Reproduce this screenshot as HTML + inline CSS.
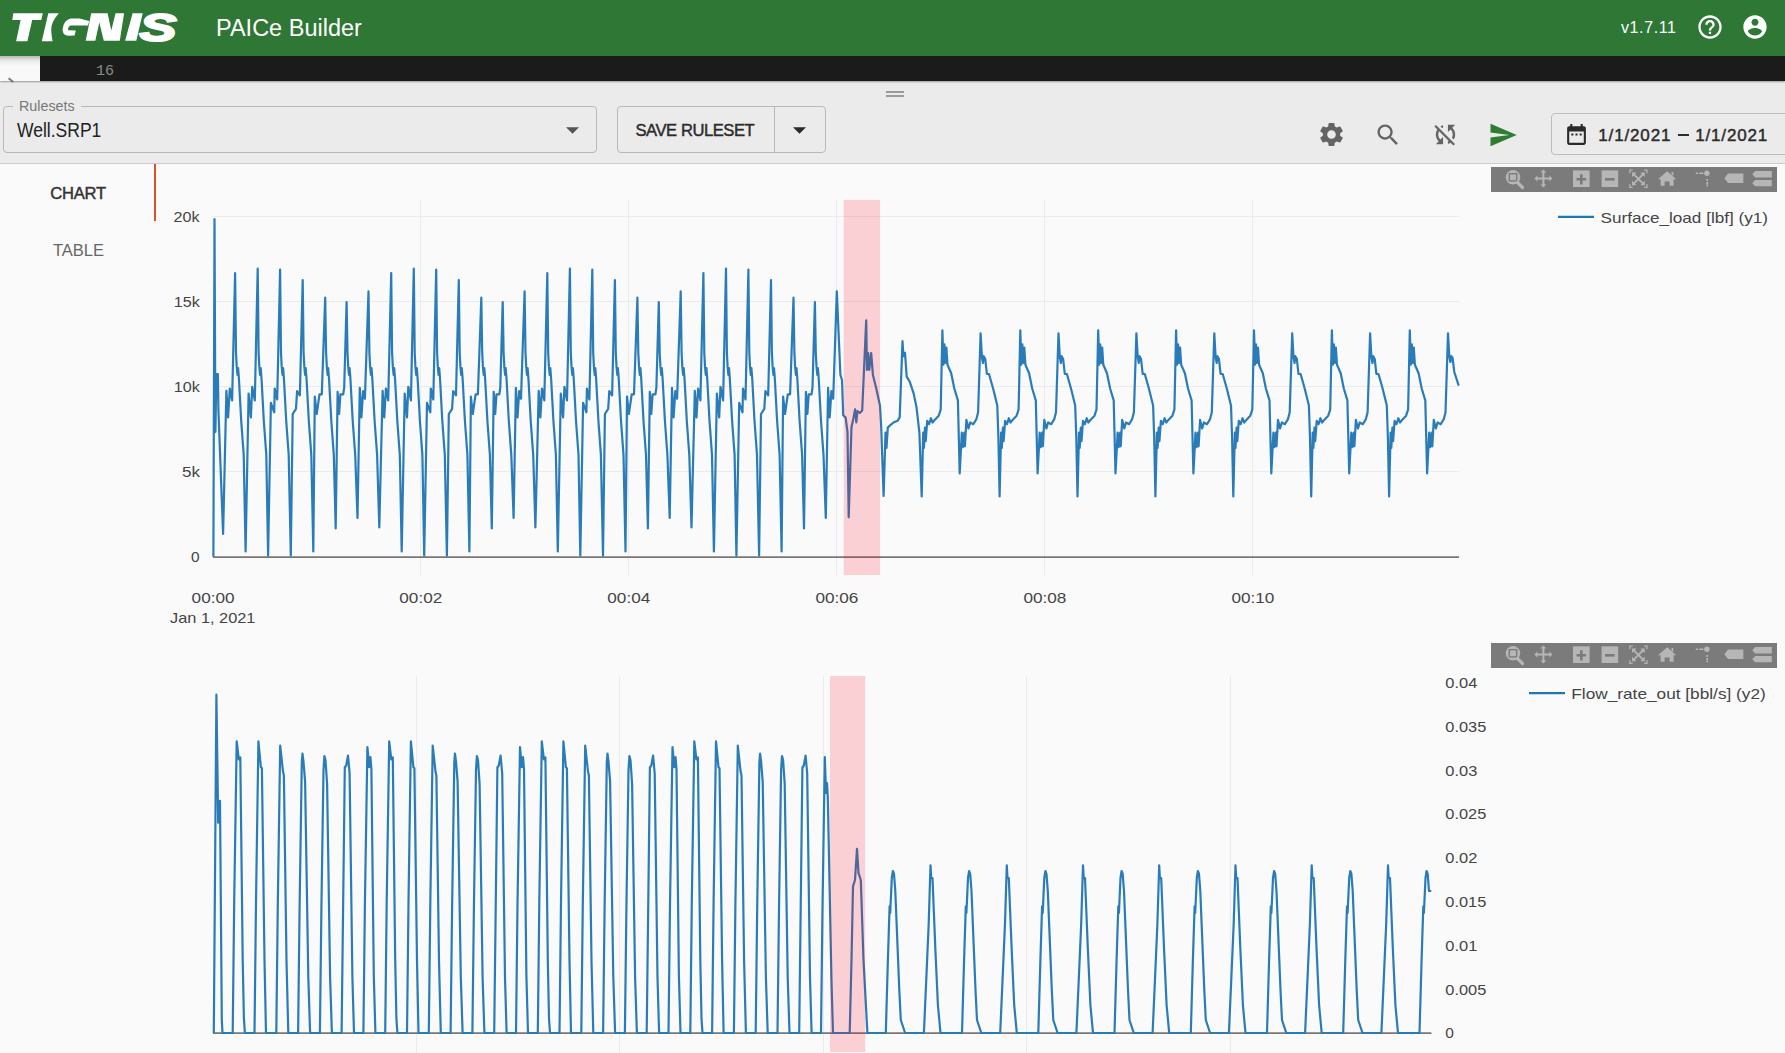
<!DOCTYPE html>
<html><head><meta charset="utf-8">
<style>
*{box-sizing:border-box;margin:0;padding:0}
html,body{width:1785px;height:1053px;overflow:hidden;background:#fafafa;font-family:"Liberation Sans",sans-serif;position:relative}
.abs{position:absolute}
.t{position:absolute;white-space:nowrap;line-height:1}
#hdr{left:0;top:0;width:1785px;height:56px;background:#2e7734}
#strip{left:0;top:56px;width:1785px;height:25px;background:#1b1b1b;box-shadow:0 1px 1.5px rgba(0,0,0,0.35);z-index:2}
#tb{left:0;top:81px;width:1785px;height:83px;background:#ebebeb;border-bottom:1px solid #cdcdcd}
.ax{font-family:"Liberation Sans",sans-serif;font-size:15px;fill:#444}
</style></head><body>
<div id="hdr" class="abs">
  <svg class="abs" style="left:0;top:0" width="200" height="56" viewBox="0 0 200 56">
   <g fill="#fff">
    <path d="M13.3,13.3 L42.8,13.3 L41.3,20.1 L32.2,20.1 L27.4,41.3 L16.1,41.3 L20.6,20.1 L12.3,20.1 Z"/>
    <path d="M48.3,13.3 L58.9,13.3 Q51,22 51.2,30 Q51.5,37 52.6,41.3 L41.8,41.3 Z"/>
    <path d="M70.5,18.6 L79.5,18.6 L89.2,21 L88,25.4 L70.3,25.4 Q67.6,27 68.2,30.2 L75.8,30.4 L74.6,35.6 L68.5,35.8 Q62.4,35.2 62.6,29.2 Q63.4,20.6 70.5,18.6 Z"/>
    <path d="M91.2,13.3 L107.6,13.3 L111.3,30.4 L115.5,13.3 L124.1,13.3 L119.8,40.8 L103.8,40.8 L99.3,22.4 L95.3,40.8 L85.7,40.8 Z"/>
    <path d="M132.6,13.3 L142.7,13.3 L136.3,40.8 L125.1,40.8 Z"/>
   </g>
   <text x="139.5" y="41" font-family="Liberation Sans" font-weight="bold" font-style="italic" font-size="38" fill="#fff" stroke="#fff" stroke-width="2" textLength="37" lengthAdjust="spacingAndGlyphs">S</text>
  </svg>
  <div class="t" style="left:216px;top:17px;color:#fff;font-size:23.5px">PAICe Builder</div>
  <div class="t" style="left:1621px;top:20px;color:#fff;font-size:16px;letter-spacing:0.6px">v1.7.11</div>
  <svg class="abs" style="left:1696px;top:13px" width="28" height="28" viewBox="0 0 24 24"><path fill="#fff" d="M11 18h2v-2h-2v2zm1-16C6.48 2 2 6.48 2 12s4.48 10 10 10 10-4.48 10-10S17.52 2 12 2zm0 18c-4.41 0-8-3.59-8-8s3.59-8 8-8 8 3.59 8 8-3.59 8-8 8zm0-14c-2.21 0-4 1.79-4 4h2c0-1.1.9-2 2-2s2 .9 2 2c0 2-3 1.75-3 5h2c0-2.25 3-2.5 3-5 0-2.21-1.79-4-4-4z"/></svg>
  <svg class="abs" style="left:1741px;top:13px" width="28" height="28" viewBox="0 0 24 24"><path fill="#fff" d="M12 2C6.48 2 2 6.48 2 12s4.48 10 10 10 10-4.48 10-10S17.52 2 12 2zm0 3c1.66 0 3 1.34 3 3s-1.34 3-3 3-3-1.34-3-3 1.34-3 3-3zm0 14.2c-2.5 0-4.71-1.28-6-3.22.03-1.99 4-3.08 6-3.08 1.99 0 5.97 1.09 6 3.08-1.29 1.94-3.5 3.22-6 3.22z"/></svg>
</div>
<div id="strip" class="abs">
  <div class="abs" style="left:0;top:0;width:40px;height:25px;background:linear-gradient(#b9b9b9 0,#ececec 5px,#f8f8f8 10px,#f9f9f9 100%)"></div>
  <div class="abs" style="left:7.5px;top:22.5px;width:5.5px;height:2px;background:#777;transform:rotate(38deg)"></div>
  <div class="t" style="left:96px;top:8px;color:#8a8a8a;font-family:'Liberation Mono',monospace;font-size:15px">16</div>
</div>
<div id="tb" class="abs">
  <div class="abs" style="left:886px;top:10px;width:18px;height:2px;background:#9a9a9a"></div>
  <div class="abs" style="left:886px;top:14px;width:18px;height:2px;background:#9a9a9a"></div>
  <div class="abs" style="left:3px;top:25px;width:594px;height:47px;border:1px solid #b8b8b8;border-radius:4px"></div>
  <div class="abs" style="left:13px;top:17px;width:68px;height:10px;background:#ebebeb"></div>
  <div class="t" style="left:19px;top:18px;color:#777;font-size:14.3px">Rulesets</div>
  <div class="t" style="left:17px;top:38.5px;color:#222;font-size:20px;transform:scaleX(0.875);transform-origin:0 0">Well.SRP1</div>
  <svg class="abs" style="left:566px;top:46px" width="13" height="7" viewBox="0 0 10 5"><path d="M0 0l5 5 5-5z" fill="#555"/></svg>
  <div class="abs" style="left:617px;top:25px;width:209px;height:47px;border:1px solid #b8b8b8;border-radius:4px"></div>
  <div class="abs" style="left:774px;top:25px;width:1px;height:47px;background:#b8b8b8"></div>
  <div class="t" style="left:635.5px;top:41.5px;color:#2c2c2c;font-size:16.6px;letter-spacing:-0.45px;-webkit-text-stroke:0.45px #2c2c2c">SAVE RULESET</div>
  <svg class="abs" style="left:793px;top:46px" width="13" height="7" viewBox="0 0 10 5"><path d="M0 0l5 5 5-5z" fill="#2a2a2a"/></svg>
  <svg class="abs" style="left:1317px;top:39px" width="29" height="29" viewBox="0 0 24 24"><path fill="#646464" d="M19.14 12.94c.04-.3.06-.61.06-.94 0-.32-.02-.64-.07-.94l2.03-1.58c.18-.14.23-.41.12-.61l-1.92-3.32c-.12-.22-.37-.29-.59-.22l-2.39.96c-.5-.38-1.03-.7-1.62-.94l-.36-2.54c-.04-.24-.24-.41-.48-.41h-3.84c-.24 0-.43.17-.47.41l-.36 2.54c-.59.24-1.13.57-1.62.94l-2.39-.96c-.22-.08-.47 0-.59.22L2.74 8.87c-.12.21-.08.47.12.61l2.03 1.58c-.05.3-.09.63-.09.94s.02.64.07.94l-2.03 1.58c-.18.14-.23.41-.12.61l1.92 3.32c.12.22.37.29.59.22l2.39-.96c.5.38 1.03.7 1.62.94l.36 2.54c.05.24.24.41.48.41h3.84c.24 0 .44-.17.47-.41l.36-2.54c.59-.24 1.13-.56 1.62-.94l2.39.96c.22.08.47 0 .59-.22l1.92-3.32c.12-.22.07-.47-.12-.61l-2.01-1.58zM12 15.6c-1.98 0-3.6-1.62-3.6-3.6s1.62-3.6 3.6-3.6 3.6 1.62 3.6 3.6-1.62 3.6-3.6 3.6z"/></svg>
  <svg class="abs" style="left:1374px;top:39.5px" width="28" height="28" viewBox="0 0 24 24"><path fill="#646464" d="M15.5 14h-.79l-.28-.27C15.41 12.59 16 11.11 16 9.5 16 5.91 13.09 3 9.5 3S3 5.91 3 9.5 5.91 16 9.5 16c1.61 0 3.09-.59 4.23-1.57l.27.28v.79l5 4.99L20.49 19l-4.99-5zm-6 0C7.01 14 5 11.99 5 9.5S7.01 5 9.5 5 14 7.01 14 9.5 11.99 14 9.5 14z"/></svg>
  <svg class="abs" style="left:1431px;top:39px" width="29" height="29" viewBox="0 0 24 24"><path fill="#646464" d="M10 6.35V4.26c-.8.21-1.55.54-2.23.96l1.46 1.46c.25-.12.5-.24.77-.33zm-7.14-.94l2.36 2.36C4.45 8.99 4 10.44 4 12c0 2.21.91 4.2 2.36 5.64L4 20h6v-6l-2.24 2.24C6.68 15.15 6 13.66 6 12c0-1 .25-1.94.68-2.77l8.08 8.08c-.25.13-.5.25-.77.34v2.09c.8-.21 1.55-.54 2.23-.96l2.36 2.36 1.27-1.27L4.14 4.14 2.86 5.41zM20 4h-6v6l2.24-2.24C17.32 8.85 18 10.34 18 12c0 1-.25 1.94-.68 2.77l1.46 1.46C19.55 15.01 20 13.56 20 12c0-2.21-.91-4.2-2.36-5.64L20 4z"/></svg>
  <svg class="abs" style="left:1488px;top:39px" width="30" height="30" viewBox="0 0 24 24"><path fill="#2e7d32" d="M2.01 21L23 12 2.01 3 2 10l15 2-15 2z"/></svg>
  <div class="abs" style="left:1551px;top:32px;width:260px;height:42px;border:1px solid #bdbdbd;border-radius:4px"></div>
  <svg class="abs" style="left:1564px;top:41px" width="25" height="25" viewBox="0 0 24 24"><path fill="#2a2a2a" d="M9 11H7v2h2v-2zm4 0h-2v2h2v-2zm4 0h-2v2h2v-2zm2-7h-1V2h-2v2H8V2H6v2H5c-1.11 0-1.99.9-1.99 2L3 20c0 1.1.89 2 2 2h14c1.1 0 2-.9 2-2V6c0-1.1-.9-2-2-2zm0 16H5V9h14v11z"/></svg>
  <div class="t" style="left:1598.3px;top:46px;color:#2c2c2c;font-size:17px;letter-spacing:0.85px;-webkit-text-stroke:0.45px #2c2c2c">1/1/2021</div>
  <div class="abs" style="left:1678px;top:53px;width:10.5px;height:1.8px;background:#2c2c2c"></div>
  <div class="t" style="left:1695.2px;top:46px;color:#2c2c2c;font-size:17px;letter-spacing:0.85px;-webkit-text-stroke:0.45px #2c2c2c">1/1/2021</div>
</div>

<div class="t" style="left:50.3px;top:186px;color:#333;font-size:16.6px;letter-spacing:-0.25px;-webkit-text-stroke:0.45px #333">CHART</div>
<div class="t" style="left:53px;top:242px;color:#666;font-size:16.5px;letter-spacing:0px">TABLE</div>
<div class="abs" style="left:153.5px;top:164px;width:2.5px;height:57px;background:#d9532a"></div>

<svg class="abs" style="left:0;top:0" width="1785" height="1053" viewBox="0 0 1785 1053">
 <g stroke="#ebebeb" stroke-width="1">
  <path d="M213 216.5H1459 M213 301.5H1459 M213 386.5H1459 M213 471.5H1459"/>
  <path d="M420.5 200V575 M628.5 200V575 M836.5 200V575 M1044.5 200V575 M1252.5 200V575"/>
  <path d="M416.5 676V1053 M619.5 676V1053 M823.5 676V1053 M1026.5 676V1053 M1230.5 676V1053"/>
 </g>
 <path d="M213 557.1H1459" stroke="#777" stroke-width="1.6"/>
 <path d="M213 1033.1H1431.4" stroke="#777" stroke-width="1.6"/>
 <path d="M213.4,556.8 L214.5,219.0 L215.4,432.0 L216.4,374.0 L217.9,374.0 L218.4,410.0 L223.1,534.0 L226.4,390.9 L228.1,417.4 L229.8,388.5 L232.1,400.4 L235.1,273.0 L236.0,352.8 L236.7,366.4 L237.5,374.9 L238.1,368.1 L238.9,378.3 L241.2,420.8 L243.7,454.8 L245.6,551.4 L248.6,393.6 L250.9,417.4 L252.2,386.8 L254.8,400.4 L257.7,268.5 L258.6,352.8 L259.3,366.4 L260.1,374.9 L260.7,368.1 L261.5,378.3 L263.8,420.8 L266.3,454.8 L268.1,555.6 L270.9,402.8 L274.2,412.3 L274.7,388.5 L277.2,399.4 L280.1,269.6 L281.0,352.8 L281.7,366.4 L282.5,374.9 L283.1,368.1 L283.9,378.3 L286.2,420.8 L288.7,454.8 L290.8,555.6 L292.7,414.0 L296.0,408.9 L297.1,391.0 L299.9,395.3 L302.7,280.0 L303.6,352.8 L304.3,366.4 L305.1,374.9 L305.7,368.1 L306.5,378.3 L308.8,420.8 L311.3,454.8 L313.3,551.4 L314.8,396.5 L316.7,414.0 L319.5,394.3 L321.8,394.3 L325.2,297.7 L326.1,352.8 L326.8,366.4 L327.6,374.9 L328.2,368.1 L329.0,378.3 L331.3,420.8 L333.8,454.8 L335.7,528.5 L337.6,391.9 L339.1,414.0 L340.4,394.3 L343.2,394.3 L344.2,387.5 L346.6,302.0 L347.5,352.8 L348.2,366.4 L349.0,374.9 L349.6,368.1 L350.4,378.3 L352.7,420.8 L355.2,454.8 L357.5,518.0 L359.8,387.8 L361.4,417.4 L363.1,391.0 L364.9,398.7 L368.5,291.4 L369.4,352.8 L370.1,366.4 L370.9,374.9 L371.5,368.1 L372.3,378.3 L374.6,420.8 L377.1,454.8 L379.3,527.5 L382.6,390.9 L384.3,417.4 L385.9,388.5 L388.2,400.4 L391.2,273.0 L392.1,352.8 L392.8,366.4 L393.6,374.9 L394.2,368.1 L395.0,378.3 L397.3,420.8 L399.8,454.8 L401.7,551.4 L404.7,393.6 L407.0,417.4 L408.3,386.8 L410.9,400.4 L413.8,268.5 L414.7,352.8 L415.4,366.4 L416.2,374.9 L416.8,368.1 L417.6,378.3 L419.9,420.8 L422.4,454.8 L424.2,555.6 L427.0,402.8 L430.3,412.3 L430.8,388.5 L433.3,399.4 L436.2,269.6 L437.1,352.8 L437.8,366.4 L438.6,374.9 L439.2,368.1 L440.0,378.3 L442.3,420.8 L444.8,454.8 L446.9,555.6 L448.8,414.0 L452.1,408.9 L453.2,391.0 L456.0,395.3 L458.8,280.0 L459.7,352.8 L460.4,366.4 L461.2,374.9 L461.8,368.1 L462.6,378.3 L464.9,420.8 L467.4,454.8 L469.4,551.4 L470.9,396.5 L472.8,414.0 L475.6,394.3 L477.9,394.3 L481.3,297.7 L482.2,352.8 L482.9,366.4 L483.7,374.9 L484.3,368.1 L485.1,378.3 L487.4,420.8 L489.9,454.8 L491.8,528.5 L493.7,391.9 L495.2,414.0 L496.5,394.3 L499.3,394.3 L500.3,387.5 L502.7,302.0 L503.6,352.8 L504.3,366.4 L505.1,374.9 L505.7,368.1 L506.5,378.3 L508.8,420.8 L511.3,454.8 L513.6,518.0 L515.9,387.8 L517.5,417.4 L519.2,391.0 L521.0,398.7 L524.6,291.4 L525.5,352.8 L526.2,366.4 L527.0,374.9 L527.6,368.1 L528.4,378.3 L530.7,420.8 L533.2,454.8 L535.4,527.5 L538.7,390.9 L540.4,417.4 L542.0,388.5 L544.3,400.4 L547.3,273.0 L548.2,352.8 L548.9,366.4 L549.7,374.9 L550.3,368.1 L551.1,378.3 L553.4,420.8 L555.9,454.8 L557.8,551.4 L560.8,393.6 L563.1,417.4 L564.4,386.8 L567.0,400.4 L569.9,268.5 L570.8,352.8 L571.5,366.4 L572.3,374.9 L572.9,368.1 L573.7,378.3 L576.0,420.8 L578.5,454.8 L580.3,555.6 L583.1,402.8 L586.4,412.3 L586.9,388.5 L589.4,399.4 L592.3,269.6 L593.2,352.8 L593.9,366.4 L594.7,374.9 L595.3,368.1 L596.1,378.3 L598.4,420.8 L600.9,454.8 L603.0,555.6 L604.9,414.0 L608.2,408.9 L609.3,391.0 L612.1,395.3 L614.9,280.0 L615.8,352.8 L616.5,366.4 L617.3,374.9 L617.9,368.1 L618.7,378.3 L621.0,420.8 L623.5,454.8 L625.5,551.4 L627.0,396.5 L628.9,414.0 L631.7,394.3 L634.0,394.3 L637.4,297.7 L638.3,352.8 L639.0,366.4 L639.8,374.9 L640.4,368.1 L641.2,378.3 L643.5,420.8 L646.0,454.8 L647.9,528.5 L649.8,391.9 L651.3,414.0 L652.6,394.3 L655.4,394.3 L656.4,387.5 L658.8,302.0 L659.7,352.8 L660.4,366.4 L661.2,374.9 L661.8,368.1 L662.6,378.3 L664.9,420.8 L667.4,454.8 L669.7,518.0 L672.0,387.8 L673.6,417.4 L675.3,391.0 L677.1,398.7 L680.7,291.4 L681.6,352.8 L682.3,366.4 L683.1,374.9 L683.7,368.1 L684.5,378.3 L686.8,420.8 L689.3,454.8 L691.5,527.5 L694.8,390.9 L696.5,417.4 L698.1,388.5 L700.4,400.4 L703.4,273.0 L704.3,352.8 L705.0,366.4 L705.8,374.9 L706.4,368.1 L707.2,378.3 L709.5,420.8 L712.0,454.8 L713.9,551.4 L716.9,393.6 L719.2,417.4 L720.5,386.8 L723.1,400.4 L726.0,268.5 L726.9,352.8 L727.6,366.4 L728.4,374.9 L729.0,368.1 L729.8,378.3 L732.1,420.8 L734.6,454.8 L736.4,555.6 L739.2,402.8 L742.5,412.3 L743.0,388.5 L745.5,399.4 L748.4,269.6 L749.3,352.8 L750.0,366.4 L750.8,374.9 L751.4,368.1 L752.2,378.3 L754.5,420.8 L757.0,454.8 L759.1,555.6 L761.0,414.0 L764.3,408.9 L765.4,391.0 L768.2,395.3 L771.0,280.0 L771.9,352.8 L772.6,366.4 L773.4,374.9 L774.0,368.1 L774.8,378.3 L777.1,420.8 L779.6,454.8 L781.6,551.4 L783.1,396.5 L785.0,414.0 L787.8,394.3 L790.1,394.3 L793.5,297.7 L794.4,352.8 L795.1,366.4 L795.9,374.9 L796.5,368.1 L797.3,378.3 L799.6,420.8 L802.1,454.8 L804.0,528.5 L805.9,391.9 L807.4,414.0 L808.7,394.3 L811.5,394.3 L812.5,387.5 L814.9,302.0 L815.8,352.8 L816.5,366.4 L817.3,374.9 L817.9,368.1 L818.7,378.3 L821.0,420.8 L823.5,454.8 L825.8,518.0 L828.1,387.8 L829.7,417.4 L831.4,391.0 L833.2,398.7 L836.8,291.4 L840.4,375.0 L842.0,380.0 L843.2,415.3 L845.6,417.6 L847.5,431.9 L848.7,517.3 L851.5,427.0 L853.5,418.0 L855.1,409.3 L856.3,422.4 L857.5,411.0 L859.8,413.0 L862.2,410.5 L866.2,320.3 L867.0,370.0 L868.2,353.0 L869.3,370.0 L871.2,353.0 L872.9,375.0 L876.4,389.0 L880.0,405.8 L881.2,427.0 L883.6,496.0 L885.5,432.7 L886.5,448.0 L887.8,427.6 L889.5,425.9 L893.5,422.5 L897.5,420.8 L899.7,417.4 L902.5,341.2 L903.5,356.2 L905.0,352.8 L906.7,376.6 L909.7,381.7 L913.7,393.6 L916.5,407.2 L919.4,432.7 L921.7,496.4 L923.2,432.7 L923.9,448.0 L925.0,427.6 L925.7,441.2 L927.2,420.8 L929.1,424.2 L930.9,418.2 L932.6,422.5 L934.7,419.9 L938.7,415.7 L940.7,409.7 L942.4,330.3 L943.4,364.7 L944.4,344.3 L945.4,363.0 L946.4,347.7 L947.5,364.7 L951.2,373.2 L954.3,388.5 L957.9,400.4 L959.7,473.5 L961.8,432.7 L962.8,447.1 L964.3,432.7 L964.9,446.3 L966.4,419.9 L968.5,428.4 L970.2,422.5 L973.3,424.2 L976.4,419.1 L978.1,412.3 L980.6,333.4 L981.9,357.0 L983.0,363.0 L983.7,356.2 L985.2,358.7 L986.9,374.0 L989.0,374.0 L993.1,388.5 L997.3,405.5 L998.4,437.8 L999.6,496.4 L1001.1,432.7 L1001.8,448.0 L1002.9,427.6 L1003.6,441.2 L1005.1,420.8 L1007.0,424.2 L1008.8,418.2 L1010.5,422.5 L1012.6,419.9 L1016.6,415.7 L1018.6,409.7 L1020.3,330.3 L1021.3,364.7 L1022.3,344.3 L1023.3,363.0 L1024.3,347.7 L1025.4,364.7 L1029.1,373.2 L1032.2,388.5 L1035.8,400.4 L1037.6,473.5 L1039.7,432.7 L1040.7,447.1 L1042.2,432.7 L1042.8,446.3 L1044.3,419.9 L1046.4,428.4 L1048.1,422.5 L1051.2,424.2 L1054.3,419.1 L1056.0,412.3 L1058.5,333.4 L1059.8,357.0 L1060.9,363.0 L1061.6,356.2 L1063.1,358.7 L1064.8,374.0 L1066.9,374.0 L1071.0,388.5 L1075.2,405.5 L1076.3,437.8 L1077.5,496.4 L1079.0,432.7 L1079.7,448.0 L1080.8,427.6 L1081.5,441.2 L1083.0,420.8 L1084.9,424.2 L1086.7,418.2 L1088.4,422.5 L1090.5,419.9 L1094.5,415.7 L1096.5,409.7 L1098.2,330.3 L1099.2,364.7 L1100.2,344.3 L1101.2,363.0 L1102.2,347.7 L1103.3,364.7 L1107.0,373.2 L1110.1,388.5 L1113.7,400.4 L1115.5,473.5 L1117.6,432.7 L1118.6,447.1 L1120.1,432.7 L1120.7,446.3 L1122.2,419.9 L1124.3,428.4 L1126.0,422.5 L1129.1,424.2 L1132.2,419.1 L1133.9,412.3 L1136.4,333.4 L1137.7,357.0 L1138.8,363.0 L1139.5,356.2 L1141.0,358.7 L1142.7,374.0 L1144.8,374.0 L1148.9,388.5 L1153.1,405.5 L1154.2,437.8 L1155.4,496.4 L1156.9,432.7 L1157.6,448.0 L1158.7,427.6 L1159.4,441.2 L1160.9,420.8 L1162.8,424.2 L1164.6,418.2 L1166.3,422.5 L1168.4,419.9 L1172.4,415.7 L1174.4,409.7 L1176.1,330.3 L1177.1,364.7 L1178.1,344.3 L1179.1,363.0 L1180.1,347.7 L1181.2,364.7 L1184.9,373.2 L1188.0,388.5 L1191.6,400.4 L1193.4,473.5 L1195.5,432.7 L1196.5,447.1 L1198.0,432.7 L1198.6,446.3 L1200.1,419.9 L1202.2,428.4 L1203.9,422.5 L1207.0,424.2 L1210.1,419.1 L1211.8,412.3 L1214.3,333.4 L1215.6,357.0 L1216.7,363.0 L1217.4,356.2 L1218.9,358.7 L1220.6,374.0 L1222.7,374.0 L1226.8,388.5 L1231.0,405.5 L1232.1,437.8 L1233.3,496.4 L1234.8,432.7 L1235.5,448.0 L1236.6,427.6 L1237.3,441.2 L1238.8,420.8 L1240.7,424.2 L1242.5,418.2 L1244.2,422.5 L1246.3,419.9 L1250.3,415.7 L1252.3,409.7 L1254.0,330.3 L1255.0,364.7 L1256.0,344.3 L1257.0,363.0 L1258.0,347.7 L1259.1,364.7 L1262.8,373.2 L1265.9,388.5 L1269.5,400.4 L1271.3,473.5 L1273.4,432.7 L1274.4,447.1 L1275.9,432.7 L1276.5,446.3 L1278.0,419.9 L1280.1,428.4 L1281.8,422.5 L1284.9,424.2 L1288.0,419.1 L1289.7,412.3 L1292.2,333.4 L1293.5,357.0 L1294.6,363.0 L1295.3,356.2 L1296.8,358.7 L1298.5,374.0 L1300.6,374.0 L1304.7,388.5 L1308.9,405.5 L1310.0,437.8 L1311.2,496.4 L1312.7,432.7 L1313.4,448.0 L1314.5,427.6 L1315.2,441.2 L1316.7,420.8 L1318.6,424.2 L1320.4,418.2 L1322.1,422.5 L1324.2,419.9 L1328.2,415.7 L1330.2,409.7 L1331.9,330.3 L1332.9,364.7 L1333.9,344.3 L1334.9,363.0 L1335.9,347.7 L1337.0,364.7 L1340.7,373.2 L1343.8,388.5 L1347.4,400.4 L1349.2,473.5 L1351.3,432.7 L1352.3,447.1 L1353.8,432.7 L1354.4,446.3 L1355.9,419.9 L1358.0,428.4 L1359.7,422.5 L1362.8,424.2 L1365.9,419.1 L1367.6,412.3 L1370.1,333.4 L1371.4,357.0 L1372.5,363.0 L1373.2,356.2 L1374.7,358.7 L1376.4,374.0 L1378.5,374.0 L1382.6,388.5 L1386.8,405.5 L1387.9,437.8 L1389.1,496.4 L1390.6,432.7 L1391.3,448.0 L1392.4,427.6 L1393.1,441.2 L1394.6,420.8 L1396.5,424.2 L1398.3,418.2 L1400.0,422.5 L1402.1,419.9 L1406.1,415.7 L1408.1,409.7 L1409.8,330.3 L1410.8,364.7 L1411.8,344.3 L1412.8,363.0 L1413.8,347.7 L1414.9,364.7 L1418.6,373.2 L1421.7,388.5 L1425.3,400.4 L1427.1,473.5 L1429.2,432.7 L1430.2,447.1 L1431.7,432.7 L1432.3,446.3 L1433.8,419.9 L1435.9,428.4 L1437.6,422.5 L1440.7,424.2 L1443.8,419.1 L1445.5,412.3 L1448.0,333.4 L1449.3,356.4 L1450.4,362.0 L1451.1,356.0 L1452.6,358.0 L1454.3,372.0 L1458.7,385.7" fill="none" stroke="#2a7cb8" stroke-width="2.2" stroke-linejoin="round"/>
 <path d="M213.8,1033.0 L216.4,694.7 L218.2,822.7 L220.0,800.9 L221.8,1020.0 L222.5,1033.0 L232.7,1033.0 L234.2,901.7 L236.7,741.3 L238.8,759.3 L240.3,757.3 L242.7,960.1 L243.9,1018.4 L244.9,1033.0 L254.5,1033.0 L256.0,901.7 L258.4,741.3 L260.9,767.3 L261.9,768.3 L264.5,960.1 L266.0,1033.0 L276.3,1033.0 L277.8,903.7 L280.2,745.6 L283.0,771.6 L283.9,775.6 L286.5,961.1 L288.3,1033.0 L298.1,1033.0 L299.6,907.3 L301.8,762.0 L302.5,753.6 L303.5,761.6 L305.1,781.6 L308.3,977.1 L310.1,1033.0 L319.9,1033.0 L321.4,908.4 L323.5,769.9 L324.4,756.0 L325.5,760.0 L327.1,784.0 L330.1,977.6 L331.9,1033.0 L341.6,1033.0 L343.1,908.1 L344.8,767.5 L346.2,765.5 L348.0,755.5 L349.6,773.5 L352.4,977.5 L354.0,1033.0 L363.4,1033.0 L364.9,904.3 L367.4,747.1 L369.2,767.1 L370.4,757.1 L371.4,769.1 L373.8,975.8 L375.4,1033.0 L385.2,1033.0 L386.7,901.7 L389.2,741.3 L391.3,759.3 L392.8,757.3 L395.2,960.1 L396.4,1018.4 L397.4,1033.0 L407.0,1033.0 L408.5,901.7 L410.9,741.3 L413.4,767.3 L414.4,768.3 L417.0,960.1 L418.5,1033.0 L428.8,1033.0 L430.3,903.7 L432.7,745.6 L435.5,771.6 L436.4,775.6 L439.0,961.1 L440.8,1033.0 L450.6,1033.0 L452.1,907.3 L454.3,762.0 L455.0,753.6 L456.0,761.6 L457.6,781.6 L460.8,977.1 L462.6,1033.0 L472.4,1033.0 L473.9,908.4 L476.0,769.9 L476.9,756.0 L478.0,760.0 L479.6,784.0 L482.6,977.6 L484.4,1033.0 L494.2,1033.0 L495.7,908.1 L497.4,767.5 L498.8,765.5 L500.6,755.5 L502.2,773.5 L505.0,977.5 L506.6,1033.0 L516.0,1033.0 L517.5,904.3 L520.0,747.1 L521.8,767.1 L523.0,757.1 L524.0,769.1 L526.4,975.8 L528.0,1033.0 L537.8,1033.0 L539.3,901.7 L541.8,741.3 L543.9,759.3 L545.4,757.3 L547.8,960.1 L549.0,1018.4 L550.0,1033.0 L559.5,1033.0 L561.0,901.7 L563.4,741.3 L565.9,767.3 L566.9,768.3 L569.5,960.1 L571.0,1033.0 L581.3,1033.0 L582.8,903.7 L585.2,745.6 L588.0,771.6 L588.9,775.6 L591.5,961.1 L593.3,1033.0 L603.1,1033.0 L604.6,907.3 L606.8,762.0 L607.5,753.6 L608.5,761.6 L610.1,781.6 L613.3,977.1 L615.1,1033.0 L624.9,1033.0 L626.4,908.4 L628.5,769.9 L629.4,756.0 L630.5,760.0 L632.1,784.0 L635.1,977.6 L636.9,1033.0 L646.7,1033.0 L648.2,908.1 L649.9,767.5 L651.3,765.5 L653.1,755.5 L654.7,773.5 L657.5,977.5 L659.1,1033.0 L668.5,1033.0 L670.0,904.3 L672.5,747.1 L674.3,767.1 L675.5,757.1 L676.5,769.1 L678.9,975.8 L680.5,1033.0 L690.3,1033.0 L691.8,901.7 L694.3,741.3 L696.4,759.3 L697.9,757.3 L700.3,960.1 L701.5,1018.4 L702.5,1033.0 L712.1,1033.0 L713.6,901.7 L716.0,741.3 L718.5,767.3 L719.5,768.3 L722.1,960.1 L723.6,1033.0 L733.9,1033.0 L735.4,903.7 L737.8,745.6 L740.6,771.6 L741.5,775.6 L744.1,961.1 L745.9,1033.0 L755.7,1033.0 L757.2,907.3 L759.4,762.0 L760.1,753.6 L761.1,761.6 L762.7,781.6 L765.9,977.1 L767.7,1033.0 L777.5,1033.0 L779.0,908.4 L781.1,769.9 L782.0,756.0 L783.1,760.0 L784.7,784.0 L787.7,977.6 L789.5,1033.0 L799.2,1033.0 L800.7,908.1 L802.4,767.5 L803.8,765.5 L805.6,755.5 L807.2,773.5 L810.0,977.5 L811.6,1033.0 L821.0,1033.0 L822.5,908.8 L824.8,757.0 L826.0,793.0 L827.0,783.0 L827.8,797.0 L831.4,977.8 L833.0,1033.0 L849.7,1033.0 L851.5,960.0 L853.0,886.4 L855.0,880.0 L857.0,848.8 L858.5,873.0 L860.8,880.0 L863.5,960.0 L867.4,1033.0 L885.8,1033.0 L887.8,963.1 L889.6,906.3 L890.2,913.0 L890.8,900.0 L891.8,878.0 L892.9,871.0 L894.0,874.0 L895.3,891.0 L899.3,990.0 L900.8,1020.0 L905.1,1033.0 L923.9,1033.0 L926.5,974.2 L928.7,923.8 L930.5,865.4 L931.2,878.0 L932.5,878.0 L935.4,950.0 L937.9,1005.0 L940.5,1033.0 L962.0,1033.0 L964.0,963.1 L965.8,906.3 L966.4,913.0 L967.0,900.0 L968.0,878.0 L969.1,871.0 L970.2,874.0 L971.5,891.0 L975.5,990.0 L977.0,1020.0 L981.3,1033.0 L1000.2,1033.0 L1002.8,974.2 L1005.0,923.8 L1006.8,865.4 L1007.5,878.0 L1008.8,878.0 L1011.7,950.0 L1014.2,1005.0 L1016.8,1033.0 L1038.3,1033.0 L1040.3,963.1 L1042.1,906.3 L1042.7,913.0 L1043.3,900.0 L1044.3,878.0 L1045.4,871.0 L1046.5,874.0 L1047.8,891.0 L1051.8,990.0 L1053.3,1020.0 L1057.6,1033.0 L1076.4,1033.0 L1079.0,974.2 L1081.2,923.8 L1083.0,865.4 L1083.7,878.0 L1085.0,878.0 L1087.9,950.0 L1090.4,1005.0 L1093.0,1033.0 L1114.5,1033.0 L1116.5,963.1 L1118.3,906.3 L1118.9,913.0 L1119.5,900.0 L1120.5,878.0 L1121.6,871.0 L1122.7,874.0 L1124.0,891.0 L1128.0,990.0 L1129.5,1020.0 L1133.8,1033.0 L1152.6,1033.0 L1155.2,974.2 L1157.4,923.8 L1159.2,865.4 L1159.9,878.0 L1161.2,878.0 L1164.1,950.0 L1166.6,1005.0 L1169.2,1033.0 L1190.8,1033.0 L1192.8,963.1 L1194.6,906.3 L1195.2,913.0 L1195.8,900.0 L1196.8,878.0 L1197.9,871.0 L1199.0,874.0 L1200.3,891.0 L1204.3,990.0 L1205.8,1020.0 L1210.1,1033.0 L1228.9,1033.0 L1231.5,974.2 L1233.7,923.8 L1235.5,865.4 L1236.2,878.0 L1237.5,878.0 L1240.4,950.0 L1242.9,1005.0 L1245.5,1033.0 L1267.0,1033.0 L1269.0,963.1 L1270.8,906.3 L1271.4,913.0 L1272.0,900.0 L1273.0,878.0 L1274.1,871.0 L1275.2,874.0 L1276.5,891.0 L1280.5,990.0 L1282.0,1020.0 L1286.3,1033.0 L1305.1,1033.0 L1307.7,974.2 L1309.9,923.8 L1311.7,865.4 L1312.4,878.0 L1313.7,878.0 L1316.6,950.0 L1319.1,1005.0 L1321.7,1033.0 L1343.2,1033.0 L1345.2,963.1 L1347.0,906.3 L1347.6,913.0 L1348.2,900.0 L1349.2,878.0 L1350.3,871.0 L1351.4,874.0 L1352.7,891.0 L1356.7,990.0 L1358.2,1020.0 L1362.5,1033.0 L1381.4,1033.0 L1384.0,974.2 L1386.2,923.8 L1388.0,865.4 L1388.7,878.0 L1390.0,878.0 L1392.9,950.0 L1395.4,1005.0 L1398.0,1033.0 L1419.5,1033.0 L1421.5,963.1 L1423.3,906.3 L1423.9,913.0 L1424.5,900.0 L1425.5,878.0 L1426.6,871.0 L1427.7,874.0 L1429.0,891.0 L1431.3,891.0" fill="none" stroke="#2a7cb8" stroke-width="2.2" stroke-linejoin="round"/>
 <rect x="843.7" y="200" width="36.4" height="375" fill="#ff0018" fill-opacity="0.17"/>
 <rect x="830" y="676" width="35.2" height="376" fill="#ff0018" fill-opacity="0.17"/>
 <g class="ax">
  <text x="173.5" y="222" textLength="26" lengthAdjust="spacingAndGlyphs">20k</text>
  <text x="173.8" y="307" textLength="26" lengthAdjust="spacingAndGlyphs">15k</text>
  <text x="173.8" y="392" textLength="26" lengthAdjust="spacingAndGlyphs">10k</text>
  <text x="182" y="477" textLength="18" lengthAdjust="spacingAndGlyphs">5k</text>
  <text x="190.9" y="562" textLength="8.6" lengthAdjust="spacingAndGlyphs">0</text>
 </g>
 <g class="ax">
  <text x="191.6" y="603.2" textLength="43" lengthAdjust="spacingAndGlyphs">00:00</text>
  <text x="399.3" y="603.2" textLength="43" lengthAdjust="spacingAndGlyphs">00:02</text>
  <text x="607.3" y="603.2" textLength="43" lengthAdjust="spacingAndGlyphs">00:04</text>
  <text x="815.4" y="603.2" textLength="43" lengthAdjust="spacingAndGlyphs">00:06</text>
  <text x="1023.4" y="603.2" textLength="43" lengthAdjust="spacingAndGlyphs">00:08</text>
  <text x="1231.4" y="603.2" textLength="43" lengthAdjust="spacingAndGlyphs">00:10</text>
  <text x="170" y="622.6" textLength="85.4" lengthAdjust="spacingAndGlyphs">Jan 1, 2021</text>
 </g>
 <g class="ax">
  <text x="1445.3" y="688" textLength="32" lengthAdjust="spacingAndGlyphs">0.04</text>
  <text x="1445.3" y="732" textLength="41" lengthAdjust="spacingAndGlyphs">0.035</text>
  <text x="1445.3" y="776" textLength="32" lengthAdjust="spacingAndGlyphs">0.03</text>
  <text x="1445.3" y="819" textLength="41" lengthAdjust="spacingAndGlyphs">0.025</text>
  <text x="1445.3" y="863" textLength="32" lengthAdjust="spacingAndGlyphs">0.02</text>
  <text x="1445.3" y="907" textLength="41" lengthAdjust="spacingAndGlyphs">0.015</text>
  <text x="1445.3" y="951" textLength="32" lengthAdjust="spacingAndGlyphs">0.01</text>
  <text x="1445.3" y="995" textLength="41" lengthAdjust="spacingAndGlyphs">0.005</text>
  <text x="1445.3" y="1038" textLength="8.6" lengthAdjust="spacingAndGlyphs">0</text>
 </g>
 <path d="M1558 216.9H1594" stroke="#1f77b4" stroke-width="2.4"/>
 <text class="ax" x="1600.5" y="222.8" textLength="167.5" lengthAdjust="spacingAndGlyphs">Surface_load [lbf] (y1)</text>
 <path d="M1529 693.1H1565" stroke="#1f77b4" stroke-width="2.4"/>
 <text class="ax" x="1571.3" y="698.8" textLength="194.5" lengthAdjust="spacingAndGlyphs">Flow_rate_out [bbl/s] (y2)</text>
</svg>
<svg class="abs" style="left:1491px;top:167px" width="286" height="25" viewBox="0 0 286 25">
<rect width="286" height="25" fill="#7b7b7b"/>
<g fill="#b6b6b6" stroke="none">
 <circle cx="22" cy="10.3" r="7.2"/>
 <rect x="17.6" y="6" width="8.8" height="8.6" fill="#7b7b7b"/>
 <rect x="19" y="7.4" width="6" height="5.8"/>
 <path d="M26.5 15.5 L31.5 20.5" stroke="#b6b6b6" stroke-width="3.2" stroke-linecap="round"/>
 <path d="M52.4 2.5 l-3 3 h2 v5 h-5 v-2 l-3 3 l3 3 v-2 h5 v5 h-2 l3 3 l3 -3 h-2 v-5 h5 v2 l3 -3 l-3 -3 v2 h-5 v-5 h2 z"/>
 <rect x="82" y="3.4" width="16.6" height="16.6"/>
 <path d="M85.5 11 h9.6 v2.6 h-9.6z M89 7.2 h2.6 v10.2 h-2.6z" fill="#7b7b7b"/>
 <rect x="110.6" y="3.4" width="16.6" height="16.6"/>
 <path d="M114 11 h9.6 v2.6 h-9.6z" fill="#7b7b7b"/>
 <path d="M138.2 2.5 h3.5 v1.3 h-2.2 v2.5 h-1.3z M156.6 2.5 h-3.5 v1.3 h2.2 v2.5 h1.3z M138.2 21 h3.5 v-1.3 h-2.2 v-2.5 h-1.3z M156.6 21 h-3.5 v-1.3 h2.2 v-2.5 h1.3z"/>
 <path d="M142 6.5 l10.8 10.8 M152.8 6.5 l-10.8 10.8" stroke="#b6b6b6" stroke-width="1.8"/>
 <path d="M141 5.5 h4.5 l-4.5 4.5z M153.8 5.5 h-4.5 l4.5 4.5z M141 18.3 h4.5 l-4.5 -4.5z M153.8 18.3 h-4.5 l4.5 -4.5z"/>
 <path d="M176.2 4.3 l-9.2 8 h2.6 v6.4 h4 v-4.3 h5 v4.3 h4 v-6.4 h2.6 z M180.5 5 h1.8 v4 l-1.8 -1.6z"/>
 <path d="M204.8 5.5 h2.2 v1.6 h-2.2z M208.2 5.5 h4.2 v1.6 h-4.2z M215.4 12 h1.7 v2 h-1.7z M215.4 15 h1.7 v2 h-1.7z M215.4 17.6 h1.7 v1.6 h-1.7z"/>
 <circle cx="215.9" cy="6.3" r="2.7"/>
 <path d="M233.4 11.2 l3.6 -4.6 h15.4 v9.3 h-15.4 z"/>
 <path d="M261.2 7.2 l3 -3.2 h16.6 v6.4 h-16.6 z M261.2 16.2 l3 -3.2 h16.6 v6.2 h-16.6 z"/>
</g></svg>
<svg class="abs" style="left:1491px;top:643px" width="286" height="25" viewBox="0 0 286 25">
<rect width="286" height="25" fill="#7b7b7b"/>
<g fill="#b6b6b6" stroke="none">
 <circle cx="22" cy="10.3" r="7.2"/>
 <rect x="17.6" y="6" width="8.8" height="8.6" fill="#7b7b7b"/>
 <rect x="19" y="7.4" width="6" height="5.8"/>
 <path d="M26.5 15.5 L31.5 20.5" stroke="#b6b6b6" stroke-width="3.2" stroke-linecap="round"/>
 <path d="M52.4 2.5 l-3 3 h2 v5 h-5 v-2 l-3 3 l3 3 v-2 h5 v5 h-2 l3 3 l3 -3 h-2 v-5 h5 v2 l3 -3 l-3 -3 v2 h-5 v-5 h2 z"/>
 <rect x="82" y="3.4" width="16.6" height="16.6"/>
 <path d="M85.5 11 h9.6 v2.6 h-9.6z M89 7.2 h2.6 v10.2 h-2.6z" fill="#7b7b7b"/>
 <rect x="110.6" y="3.4" width="16.6" height="16.6"/>
 <path d="M114 11 h9.6 v2.6 h-9.6z" fill="#7b7b7b"/>
 <path d="M138.2 2.5 h3.5 v1.3 h-2.2 v2.5 h-1.3z M156.6 2.5 h-3.5 v1.3 h2.2 v2.5 h1.3z M138.2 21 h3.5 v-1.3 h-2.2 v-2.5 h-1.3z M156.6 21 h-3.5 v-1.3 h2.2 v-2.5 h1.3z"/>
 <path d="M142 6.5 l10.8 10.8 M152.8 6.5 l-10.8 10.8" stroke="#b6b6b6" stroke-width="1.8"/>
 <path d="M141 5.5 h4.5 l-4.5 4.5z M153.8 5.5 h-4.5 l4.5 4.5z M141 18.3 h4.5 l-4.5 -4.5z M153.8 18.3 h-4.5 l4.5 -4.5z"/>
 <path d="M176.2 4.3 l-9.2 8 h2.6 v6.4 h4 v-4.3 h5 v4.3 h4 v-6.4 h2.6 z M180.5 5 h1.8 v4 l-1.8 -1.6z"/>
 <path d="M204.8 5.5 h2.2 v1.6 h-2.2z M208.2 5.5 h4.2 v1.6 h-4.2z M215.4 12 h1.7 v2 h-1.7z M215.4 15 h1.7 v2 h-1.7z M215.4 17.6 h1.7 v1.6 h-1.7z"/>
 <circle cx="215.9" cy="6.3" r="2.7"/>
 <path d="M233.4 11.2 l3.6 -4.6 h15.4 v9.3 h-15.4 z"/>
 <path d="M261.2 7.2 l3 -3.2 h16.6 v6.4 h-16.6 z M261.2 16.2 l3 -3.2 h16.6 v6.2 h-16.6 z"/>
</g></svg>
</body></html>
